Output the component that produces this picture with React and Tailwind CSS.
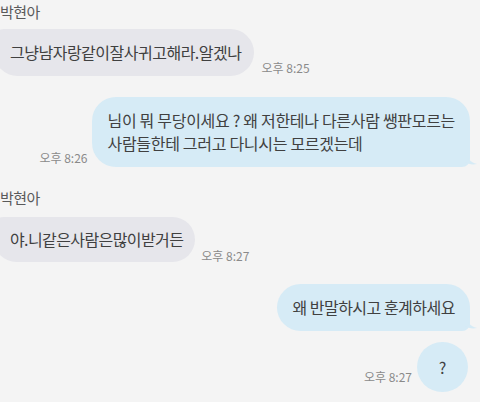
export default function App() {
  const font = { fontFamily: '"Noto Sans CJK KR", "Noto Sans", sans-serif' };

  const Time = ({ children, className = '' }) => (
    <span className={`text-[12px] leading-none text-[#8a8a8a] whitespace-nowrap ${className}`}>{children}</span>
  );

  const TailRight = ({ color }) => (
    <svg className="absolute -right-[7px] bottom-[2px]" width="12" height="12" viewBox="0 0 12 12">
      <path d="M0 0 C2 5 5 9 12 11 C7 12 3 11 0 9 Z" fill={color} />
    </svg>
  );

  return (
    <div style={font} className="w-[480px] h-[402px] overflow-hidden bg-[#f4f4f4] text-[#404040] flex flex-col">
      <div className="pt-[3px] text-[15px] leading-[18px] tracking-[-0.5px] text-[#5a5a5a]">박현아</div>

      <div className="mt-2 flex items-end gap-[7px]">
        <div className="-ml-[6px] bg-[#e6e6eb] rounded-[24px] rounded-tl-[10px] pl-[16px] pr-[13px] py-3 text-[16px] leading-[23px] tracking-[-0.5px]">
          그냥남자랑같이잘사귀고해라.알겠나
        </div>
        <Time className="mb-[2px]">오후 8:25</Time>
      </div>

      <div className="mt-[21px] flex items-end justify-end gap-[5px] pr-[10px]">
        <Time className="mb-[3px]">오후 8:26</Time>
        <div className="relative bg-[#d6ebf6] rounded-[24px] rounded-br-[8px] px-[15px] py-3 text-[16px] leading-[23px] tracking-[-0.3px] whitespace-nowrap">
          님이 뭐 무당이세요 ? 왜 저한테나 다른사람 쌩판모르는
          <br />
          사람들한테 그러고 다니시는 모르겠는데
          <TailRight color="#d6ebf6" />
        </div>
      </div>

      <div className="mt-[22px] text-[15px] leading-[18px] tracking-[-0.5px] text-[#5a5a5a]">박현아</div>

      <div className="mt-[10px] flex items-end gap-[6px]">
        <div className="-ml-[6px] bg-[#e6e6eb] rounded-[24px] rounded-tl-[10px] pl-[16px] pr-[12px] py-[11px] text-[16px] leading-[23px] tracking-[-0.6px]">
          야.니같은사람은많이받거든
        </div>
        <Time className="mb-0">오후 8:27</Time>
      </div>

      <div className="mt-[22px] flex justify-end pr-[10px]">
        <div className="relative bg-[#d6ebf6] rounded-[24px] rounded-br-[8px] px-[15px] py-3 text-[16px] leading-[23px] tracking-[-0.5px] whitespace-nowrap">
          왜 반말하시고 훈계하세요
          <TailRight color="#d6ebf6" />
        </div>
      </div>

      <div className="mt-[11px] flex items-end justify-end gap-[5px] pr-[12px]">
        <Time className="mb-[9px]">오후 8:27</Time>
        <div className="w-[51px] h-[50px] rounded-full bg-[#d6ebf6] flex items-center justify-center text-[16px]">?</div>
      </div>
    </div>
  );
}
